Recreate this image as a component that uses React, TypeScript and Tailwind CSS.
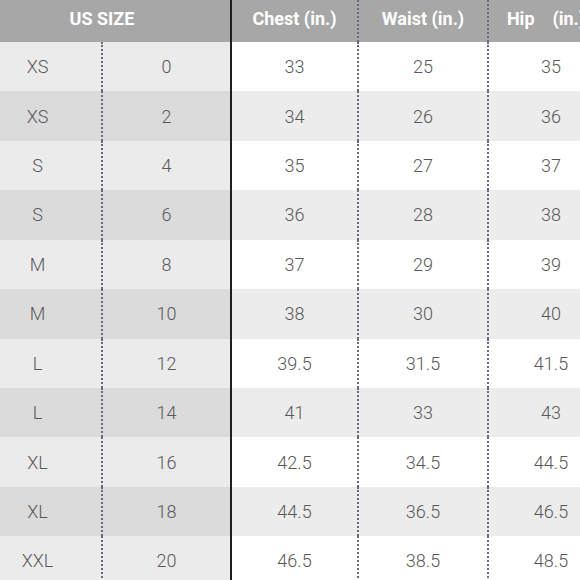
const rows: [string, string, string, string, string][] = [
  ['XS', '0', '33', '25', '35'],
  ['XS', '2', '34', '26', '36'],
  ['S', '4', '35', '27', '37'],
  ['S', '6', '36', '28', '38'],
  ['M', '8', '37', '29', '39'],
  ['M', '10', '38', '30', '40'],
  ['L', '12', '39.5', '31.5', '41.5'],
  ['L', '14', '41', '33', '43'],
  ['XL', '16', '42.5', '34.5', '44.5'],
  ['XL', '18', '44.5', '36.5', '46.5'],
  ['XXL', '20', '46.5', '38.5', '48.5'],
]

const dotted = 'border-r-2 border-dotted border-[#6a6a7c]'

export default function App() {
  return (
    <div className="h-[580px] w-[580px] overflow-hidden bg-white font-['Roboto',sans-serif]">
      <div className="ml-[-26px] w-[640px]">
        {/* Header */}
        <div className="flex h-[42px] bg-[#a7a7a7] text-[18px] font-bold text-white">
          <div className="flex w-[258px] items-center justify-center border-r-2 border-[#1f1f1f] pb-[6px]">US SIZE</div>
          <div className={`flex w-[127px] items-center justify-center pb-[6px] ${dotted}`}>Chest (in.)</div>
          <div className={`flex w-[130px] items-center justify-center pb-[6px] ${dotted}`}>Waist (in.)</div>
          <div className="flex w-[124px] items-center justify-center whitespace-pre pb-[6px] pr-[10px]">Hip    (in.)</div>
        </div>

        {/* Rows */}
        {rows.map((r, i) => {
          const even = i % 2 === 1
          const left = even ? 'bg-[#dbdbdb]' : 'bg-[#ebebeb]'
          const right = even ? 'bg-[#ececec]' : 'bg-white'
          return (
            <div key={i} className="flex h-[49.43px] text-[18px] font-light text-[#595959]">
              <div className={`flex w-[129px] items-center justify-center ${left} ${dotted}`}>{r[0]}</div>
              <div className={`flex w-[129px] items-center justify-center border-r-2 border-[#1f1f1f] ${left}`}>
                {r[1]}
              </div>
              <div className={`flex w-[127px] items-center justify-center ${right} ${dotted}`}>{r[2]}</div>
              <div className={`flex w-[130px] items-center justify-center ${right} ${dotted}`}>{r[3]}</div>
              <div className={`flex w-[124px] items-center justify-center ${right}`}>{r[4]}</div>
            </div>
          )
        })}
      </div>
    </div>
  )
}
